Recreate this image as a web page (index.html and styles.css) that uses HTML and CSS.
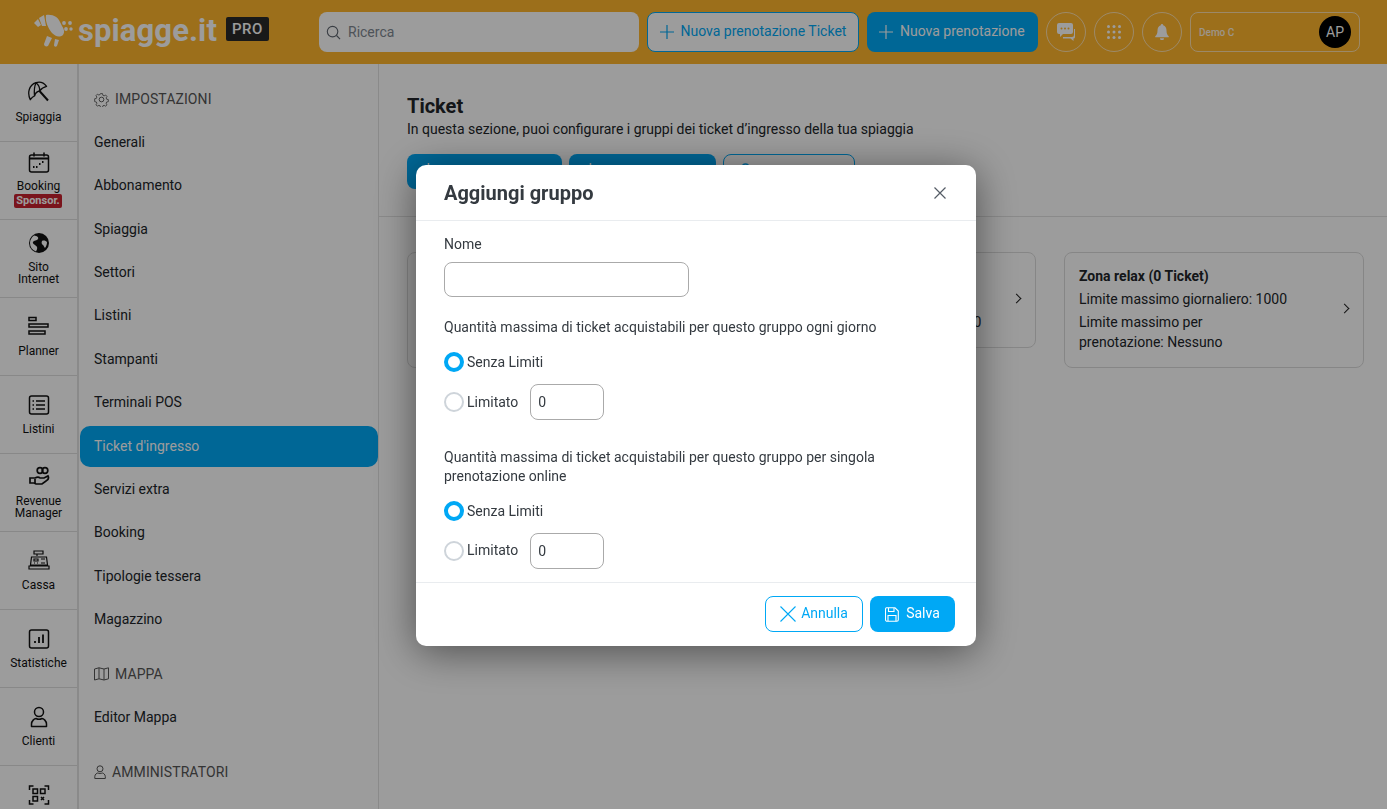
FILE: index.html
```html
<!DOCTYPE html>
<html lang="it">
<head>
<meta charset="utf-8">
<title>Ticket - spiagge.it PRO</title>
<link rel="stylesheet" href="styles.css">
</head>
<body>
<div class="app">
  <header class="topbar">
    <div class="logo">
      <svg class="logo-mark" width="40" height="34" viewBox="0 0 40 34" fill="#fff">
        <path d="M1 9 L5 5 L8 11 L5 13Z"/>
        <path d="M6 4 L11 1 L13 12 L9 12Z"/>
        <path d="M13 1 C20 0 25 3 27 8 L29 12 C31 15 32 18 30 21 C26 24 22 22 19 19 C15 14 12 7 13 1Z"/>
        <circle cx="31" cy="9" r="1.900"/><circle cx="37" cy="9" r="1.900"/><circle cx="33" cy="15" r="1.900"/><circle cx="38" cy="15" r="1.700"/>
        <path d="M14 22 L19 24 L15 32 C13 33 11 32 11 30Z"/>
        <path d="M22 25 L26 26 L24 32 C23 33 21 33 21 31Z"/>
      </svg>
      <span class="logo-text">spiagge.it</span>
      <span class="logo-pro">PRO</span>
    </div>
    <div class="search">
      <svg width="15" height="15" viewBox="0 0 16 16" fill="none" stroke="#5f6670" stroke-width="1.200"><circle cx="7" cy="7" r="5.600"/><path d="M11.200 11.200 15 15"/></svg>
      <span>Ricerca</span>
    </div>
    <button class="tbtn tbtn-outline"><svg width="14" height="14" viewBox="0 0 14 14" stroke="currentColor" stroke-width="1.200"><path d="M7 0v14M0 7h14"/></svg>Nuova prenotazione Ticket</button>
    <button class="tbtn tbtn-solid"><svg width="14" height="14" viewBox="0 0 14 14" stroke="currentColor" stroke-width="1.200"><path d="M7 0v14M0 7h14"/></svg>Nuova prenotazione</button>
    <div class="round">
      <svg width="20" height="20" viewBox="0 0 20 20" fill="#fff"><path d="M3 1h12a2 2 0 0 1 2 2v7a2 2 0 0 1-2 2H7l-3 3v-3H3a2 2 0 0 1-2-2V3a2 2 0 0 1 2-2z"/><path d="M18 7h1v8a1.500 1.500 0 0 1-1.500 1.500V19l-3-2.500H7V15h9a2 2 0 0 0 2-2z"/><circle cx="5.500" cy="6.500" r="1" fill="#ffb52d"/><circle cx="9" cy="6.500" r="1" fill="#ffb52d"/><circle cx="12.500" cy="6.500" r="1" fill="#ffb52d"/></svg>
    </div>
    <div class="round">
      <svg width="16" height="16" viewBox="0 0 16 16" fill="#fff"><circle cx="2.500" cy="2.500" r="1.500"/><circle cx="8" cy="2.500" r="1.500"/><circle cx="13.500" cy="2.500" r="1.500"/><circle cx="2.500" cy="8" r="1.500"/><circle cx="8" cy="8" r="1.500"/><circle cx="13.500" cy="8" r="1.500"/><circle cx="2.500" cy="13.500" r="1.500"/><circle cx="8" cy="13.500" r="1.500"/><circle cx="13.500" cy="13.500" r="1.500"/></svg>
    </div>
    <div class="round">
      <svg width="14" height="16" viewBox="0 0 14 16" fill="#fff"><path d="M7 0a1.200 1.200 0 0 1 1.200 1.300C10.500 2 11.500 4 11.500 6.500c0 3 .8 4.300 2.200 5.800.3.400.1 1-.5 1H.8c-.6 0-.8-.6-.5-1C1.700 10.800 2.500 9.500 2.500 6.500 2.500 4 3.500 2 5.800 1.300A1.200 1.200 0 0 1 7 0z"/><path d="M5 14.300h4a2 2 0 0 1-4 0z"/></svg>
    </div>
    <div class="account">
      <span class="account-name">Demo C</span>
      <span class="avatar">AP</span>
    </div>
  </header>

  <div class="body">
    <nav class="rail">
      <a class="rail-item">
        <svg width="24" height="24" viewBox="0 0 24 24" fill="none" stroke="#111" stroke-width="1.300" stroke-linejoin="round"><path d="M3.300 18.700C0 12 2 4 9 1.700 13 .5 17 2 19.600 5.300 16 6 14 8 12.500 10 10 10.500 8 13 7.500 15 6 15.500 4.500 17 3.300 18.700Z"/><path d="M9 1.700C7 6 7 10 7.500 15M9 1.700C12 4 13 7 12.500 10"/><path d="M12.500 10 21 19.500" stroke-width="2"/></svg>
        <span>Spiaggia</span>
      </a>
      <a class="rail-item">
        <svg width="22" height="22" viewBox="0 0 22 22" fill="none" stroke="#111" stroke-width="1.500"><rect x="1.500" y="3" width="19" height="17" rx="2"/><path d="M1.500 6.500h19" stroke-width="2"/><path d="M6 1v3M16 1v3" stroke-linecap="round"/><path d="M5 15h1.500M8 15h1.500M11 12h1.500M14 10h1.500" stroke-width="1.800"/></svg>
        <span>Booking</span>
        <em class="sponsor">Sponsor.</em>
      </a>
      <a class="rail-item">
        <svg width="22" height="22" viewBox="0 0 22 22"><circle cx="11" cy="11" r="10" fill="#111"/><path d="M6 3.500C9 4 11 5 10 7 9 9 6 8 5 10c-1 2 3 3 4 5 .6 1.400-.2 3-1 4.500C4 18 2 15 2 11 2 8 3.500 5.500 6 3.500zM14 9c2-1 4 0 5 1 0 2-.5 4-2 6-1-1-1-2-2-3-1-.5-2-2-1-4z" fill="#fff" stroke="none"/></svg>
        <span>Sito<br>Internet</span>
      </a>
      <a class="rail-item">
        <svg width="22" height="22" viewBox="0 0 22 22" fill="none" stroke="#111" stroke-width="1.500"><rect x="1" y="1.500" width="7" height="3"/><rect x="1" y="8" width="19" height="3"/><rect x="1" y="15" width="16" height="3"/></svg>
        <span>Planner</span>
      </a>
      <a class="rail-item">
        <svg width="22" height="22" viewBox="0 0 22 22" fill="none" stroke="#111" stroke-width="1.500"><rect x="1.500" y="2" width="19" height="18" rx="2"/><path d="M8 7h9M8 11h9M8 15h9"/><path d="M4.500 7h1.500M4.500 11h1.500M4.500 15h1.500"/></svg>
        <span>Listini</span>
      </a>
      <a class="rail-item">
        <svg width="22" height="22" viewBox="0 0 22 22" fill="none" stroke="#111" stroke-width="1.700"><circle cx="12" cy="4.500" r="2.800"/><circle cx="17" cy="4.500" r="2.800"/><path d="M2 12h5c2-1 4-1 5 0h4l4-2c1 2 0 4-2 5l-4 3H8l-2-1H2z"/><path d="M7 13v4"/></svg>
        <span>Revenue<br>Manager</span>
      </a>
      <a class="rail-item">
        <svg width="22" height="22" viewBox="0 0 22 22" fill="none" stroke="#111" stroke-width="1.200"><path d="M6 1h9v3H6zM9 4v2M3.500 7h15l1 8h-17zM1 16h20v3H1z"/><path d="M6 9h4v2H6zM13 9h4M6 13h1M9 13h1M13 13h4"/></svg>
        <span>Cassa</span>
      </a>
      <a class="rail-item">
        <svg width="22" height="22" viewBox="0 0 22 22" fill="none" stroke="#111" stroke-width="1.500"><rect x="1.500" y="2" width="19" height="18" rx="2"/><path d="M7 15v-2M11 15V9M15 15V6.500" stroke-width="1.800"/></svg>
        <span>Statistiche</span>
      </a>
      <a class="rail-item">
        <svg width="22" height="22" viewBox="0 0 22 22" fill="none" stroke="#111" stroke-width="1.500"><circle cx="11" cy="6" r="4.500"/><path d="M3.500 20.500v-2.500c0-3 3-5.500 4.500-5.500 2 1 4 1 6 0 1.500 0 4.500 2.500 4.500 5.500v2.500z" stroke-linejoin="round"/></svg>
        <span>Clienti</span>
      </a>
      <a class="rail-item">
        <svg width="22" height="22" viewBox="0 0 22 22" fill="none" stroke="#111" stroke-width="1.500"><path d="M1.500 6V2h4M16.500 2h4v4M1.500 16v4h4M20.500 16v4h-4"/><rect x="5" y="5" width="4.500" height="4.500"/><rect x="12.500" y="5" width="4.500" height="4.500"/><rect x="5" y="12.500" width="4.500" height="4.500"/><path d="M13 13l3 3M16 13l-3 3"/></svg>
      </a>
    </nav>

    <aside class="subnav">
      <h3 class="sub-title">
        <svg width="15" height="15" viewBox="0 0 16 16" fill="none" stroke="#555" stroke-width="1"><circle cx="8" cy="8" r="2.500"/><path d="M6.800 1h2.400l.4 2 1.500.7 1.800-1 1.600 1.700-1 1.700.6 1.600 2 .4v2.400l-2 .5-.6 1.500 1 1.800-1.600 1.600-1.800-1-1.500.6-.4 2H6.800l-.4-2-1.500-.6-1.800 1-1.600-1.600 1-1.800-.6-1.500-2-.5V7.100l2-.4.6-1.600-1-1.700 1.600-1.700 1.800 1 1.500-.7z" transform="translate(.8 .8) scale(.9)"/></svg>
        IMPOSTAZIONI
      </h3>
      <a class="sub-link">Generali</a>
      <a class="sub-link wide">Abbonamento</a>
      <a class="sub-link">Spiaggia</a>
      <a class="sub-link">Settori</a>
      <a class="sub-link wide">Listini</a>
      <a class="sub-link">Stampanti</a>
      <a class="sub-link wide">Terminali POS</a>
      <a class="sub-link active">Ticket d'ingresso</a>
      <a class="sub-link">Servizi extra</a>
      <a class="sub-link wide">Booking</a>
      <a class="sub-link">Tipologie tessera</a>
      <a class="sub-link">Magazzino</a>
      <h3 class="sub-title sub-title-map">
        <svg width="15" height="14" viewBox="0 0 15 14" fill="none" stroke="#555" stroke-width="1"><path d="M.5 2 5 .8l5 1.200 4.500-1.200v11L10 13l-5-1.200-4.500 1.200zM5 .8v11M10 2v11"/></svg>
        MAPPA
      </h3>
      <a class="sub-link">Editor Mappa</a>
      <h3 class="sub-title sub-title-admin">
        <svg width="12" height="14" viewBox="0 0 12 14" fill="none" stroke="#555" stroke-width="1"><circle cx="6" cy="3.800" r="3"/><path d="M.8 13.500v-2c0-2 2-3.500 3-3.500 1.500.6 3 .6 4.500 0 1 0 3 1.500 3 3.500v2z"/></svg>
        AMMINISTRATORI
      </h3>
    </aside>

    <main class="main">
      <section class="main-head">
        <h1>Ticket</h1>
        <p>In questa sezione, puoi configurare i gruppi dei ticket d’ingresso della tua spiaggia</p>
        <div class="main-actions">
          <button class="act act-solid act-a"><svg width="17" height="17" viewBox="0 0 17 17" stroke="currentColor" stroke-width="1.500"><path d="M8.500 0v17M0 8.500h17"/></svg></button>
          <button class="act act-solid act-b"><svg width="17" height="17" viewBox="0 0 17 17" stroke="currentColor" stroke-width="1.500"><path d="M8.500 0v17M0 8.500h17"/></svg></button>
          <button class="act act-outline act-c"><svg width="17" height="17" viewBox="0 0 17 17" fill="none" stroke="currentColor" stroke-width="1.500"><circle cx="8.500" cy="5" r="4"/></svg></button>
        </div>
      </section>
      <section class="cards">
        <article class="card card-tall"></article>
        <article class="card">
          <div class="card-body">
            <h4>Piscina (0 Ticket)</h4>
            <p>Limite massimo giornaliero: 1000</p>
            <p>Limite massimo per prenotazione: 10</p>
          </div>
          <span class="chev"></span>
        </article>
        <article class="card card-tall">
          <div class="card-body">
            <h4>Zona relax (0 Ticket)</h4>
            <p>Limite massimo giornaliero: 1000</p>
            <p>Limite massimo per prenotazione:&nbsp;Nessuno</p>
          </div>
          <span class="chev"></span>
        </article>
      </section>
    </main>
  </div>
</div>

<div class="overlay">
  <div class="modal">
    <div class="modal-head">
      <h2>Aggiungi gruppo</h2>
      <svg class="close" width="12" height="12" viewBox="0 0 12 12" stroke="#555c66" stroke-width="1.200"><path d="M.5.500l11 11M11.500.500l-11 11"/></svg>
    </div>
    <div class="modal-body">
      <label class="field-label">Nome</label>
      <input class="text-input" type="text">
      <p class="q q-first">Quantità massima di ticket acquistabili per questo gruppo ogni giorno</p>
      <div class="radio-row"><span class="radio on"></span><span>Senza Limiti</span></div>
      <div class="radio-row radio-row-lim"><span class="radio"></span><span>Limitato</span><span class="num">0</span></div>
      <p class="q q-second">Quantità massima di ticket acquistabili per questo gruppo per singola prenotazione online</p>
      <div class="radio-row"><span class="radio on"></span><span>Senza Limiti</span></div>
      <div class="radio-row radio-row-lim radio-row-last"><span class="radio"></span><span class="lim-label">Limitato</span><span class="num">0</span></div>
    </div>
    <div class="modal-foot">
      <button class="mbtn mbtn-outline"><svg width="16" height="16" viewBox="0 0 16 16" stroke="currentColor" stroke-width="1.100"><path d="M.5.500l15 15M15.500.500l-15 15"/></svg>Annulla</button>
      <button class="mbtn mbtn-solid"><svg width="14" height="15" viewBox="0 0 14 15" fill="none" stroke="currentColor" stroke-width="1.100"><path d="M1.500.8h8.500l3.300 3.300v8.600a1.500 1.500 0 0 1-1.500 1.500h-10.300a1.500 1.500 0 0 1-1-1.500V2.300a1.500 1.500 0 0 1 1-1.500z"/><path d="M3.500 1v3.500h5.500V1M3 14V8.500h8V14"/></svg>Salva</button>
    </div>
  </div>
</div>
</body>
</html>
```

FILE: styles.css
```css
* { box-sizing: border-box; }
html, body { margin: 0; height: 100%; overflow: hidden; }
body { font-family: Roboto, "Liberation Sans", sans-serif; font-size: 14px; color: #212529; background: #fff; }
button { font-family: inherit; cursor: pointer; }
h1, h2, h3, h4, p { margin: 0; }

.app { display: flex; flex-direction: column; height: 809px; overflow: hidden; }

.topbar { flex: 0 0 64px; height: 64px; background: #ffb52d; display: flex; align-items: center; padding: 0 0 0 33px; }
.logo { display: flex; align-items: center; width: 286px; flex: 0 0 286px; color: #fff; }
.logo-mark { flex: none; margin-right: 5px; margin-top: -2px; }
.logo-text { font-size: 31px; font-weight: 700; letter-spacing: .1px; line-height: 1; margin-right: 9px; margin-top: -3px; }
.logo-pro { background: #2a2a2a; color: #fff; font-size: 15px; font-weight: 500; letter-spacing: .5px; padding: 2px 6px; border-radius: 2px; height: 24px; line-height: 20px; margin-top: -6px; }
.search { width: 320px; height: 40px; background: #fff; border-radius: 8px; display: flex; align-items: center; gap: 7px; padding: 0 7px; margin-right: 8px; color: #808892; font-size: 14px; flex: none; }
.tbtn { height: 40px; border-radius: 8px; font-size: 14px; line-height: 18px; display: flex; align-items: center; gap: 6.500px; padding: 0 8px 2px; margin-right: 8px; flex: none; white-space: nowrap; }
.tbtn svg { margin-top: 2px; }
.tbtn-outline { width: 212px; background: #fff; color: #00a8f5; border: 1px solid #00a8f5; padding-left: 12px; padding-right: 11px; }
.tbtn-solid { width: 171px; background: #00a8f5; color: #fff; border: 0; padding-left: 12px; padding-right: 12px; gap: 7px; }
.round { width: 40px; height: 40px; flex: none; border: 1px solid rgba(255,255,255,.6); border-radius: 50%; display: flex; align-items: center; justify-content: center; margin-right: 8px; }
.account { width: 170px; height: 40px; flex: none; border: 1px solid rgba(255,255,255,.6); border-radius: 8px; display: flex; align-items: center; justify-content: space-between; padding: 0 8px 0 8px; color: #fff; }
.account-name { font-size: 10px; font-weight: 500; opacity: .85; }
.avatar { width: 32px; height: 32px; border-radius: 50%; background: #000; display: flex; align-items: center; justify-content: center; color: #fff; font-size: 14px; line-height: 1; }

.body { flex: 1; display: flex; min-height: 0; }

.rail { flex: 0 0 79px; width: 79px; border-right: 2px solid #e2e2e2; display: flex; flex-direction: column; overflow: hidden; background: #fff; }
.rail-item { flex: 0 0 78px; height: 78px; width: 77px; border-bottom: 1px solid #dedede; display: flex; flex-direction: column; align-items: center; padding-top: 18px; text-align: center; font-size: 12px; line-height: 12px; color: #111; }
.rail-item svg { display: block; flex: none; margin-bottom: 7px; }
.rail-item:nth-child(1) { padding-top: 17px; }
.rail-item:nth-child(2) { padding-top: 10px; }
.rail-item:nth-child(3) { padding-top: 12px; }
.rail-item:nth-child(6) { padding-top: 12px; }
.rail-item:nth-child(1) svg, .rail-item:nth-child(2) svg { margin-bottom: 6px; }
.sponsor { display: block; margin: 2px 1px 0 0; background: #c8212e; color: #fff; font-style: normal; font-weight: 700; font-size: 11px; line-height: 14px; height: 14px; width: 48px; border-radius: 2px; }

.subnav { flex: 0 0 300px; width: 300px; border-right: 1px solid #e2e2e2; padding: 0 0 0 1px; background: #fff; overflow: hidden; }
.sub-title { font-size: 14px; font-weight: 400; color: #555; display: flex; align-items: center; gap: 6px; height: 20px; padding-left: 14px; margin-top: 25px; margin-bottom: 13px; letter-spacing: .1px; }
.sub-title-map, .sub-title-admin { margin-top: 24px; }
.sub-link { display: flex; align-items: center; height: 41px; margin-bottom: 2px; padding: 0 0 1px 14px; font-size: 14px; color: #212529; border-radius: 10px; }
.sub-link.wide { margin-bottom: 3px; }
.sub-link.active { background: #00a8f5; color: #fff; }

.main { flex: 1; min-width: 0; background: #fff; }
.main-head { height: 153px; border-bottom: 1px solid #e2e2e2; padding: 30px 28px 0 28px; }
.main-head h1 { font-size: 20px; line-height: 24px; font-weight: 700; color: #212529; }
.main-head p { font-size: 14px; line-height: 20px; margin-top: 1px; }
.main-actions { display: flex; gap: 7px; margin-top: 15px; }
.act { height: 35px; border-radius: 8px; flex: none; display: flex; align-items: center; padding: 0 0 0 12.500px; }
.act-solid { background: #00a8f5; border: 0; color: #fff; }
.act-outline { background: #fff; border: 1px solid #00a8f5; color: #00a8f5; }
.act-a { width: 155px; }
.act-b { width: 147px; }
.act-c { width: 132px; }

.cards { display: flex; align-items: flex-start; gap: 28.500px; padding: 35px 0 0 28px; }
.card { flex: 0 0 300px; width: 300px; height: 96px; border: 1px solid #dcdcdc; border-radius: 8px; padding: 14px; display: flex; align-items: center; }
.card-tall { height: 116px; }
.card-body { flex: 1; min-width: 0; margin-top: -3px; }
.card h4 { font-size: 14px; font-weight: 700; line-height: 20px; color: #212529; }
.card p { font-size: 14px; line-height: 20px; margin-top: 3px; }
.chev { flex: none; width: 7px; height: 7px; border-top: 1.700px solid #222; border-right: 1.700px solid #222; transform: rotate(45deg); margin-right: 1px; margin-top: -4px; }

.overlay { position: fixed; inset: 0; background: rgba(0,0,0,.39); }
.modal { position: absolute; left: 416px; top: 165px; width: 560px; height: 481px; background: #fff; border-radius: 10px; box-shadow: 0 6px 40px rgba(0,0,0,.5); display: flex; flex-direction: column; overflow: hidden; color: #343a40; }
.modal-head { height: 56px; flex: none; border-bottom: 1px solid #e9ecef; display: flex; align-items: center; justify-content: space-between; padding: 0 30px 0 28px; }
.modal-head h2 { font-size: 20px; font-weight: 700; color: #343a40; }
.modal-body { flex: 1; padding: 14px 28px 0 28px; min-height: 0; }
.field-label { display: block; font-size: 14px; line-height: 18px; }
.text-input { display: block; width: 245px; height: 35px; margin-top: 9px; border: 1px solid #aaa; border-radius: 8px; background: #fff; outline: none; }
.q { font-size: 14px; line-height: 19px; }
.q-first { margin-top: 21px; }
.q-second { margin-top: 28px; width: 480px; }
.radio-row { display: flex; align-items: center; height: 20px; margin-top: 15px; font-size: 14px; }
.radio-row-lim { height: 36px; margin-top: 12px; }
.lim-label { margin-bottom: 2px; }
.radio { width: 20px; height: 20px; border-radius: 50%; border: 2px solid #ced4da; margin-right: 3px; flex: none; }
.radio.on { border: 4.500px solid #00a8f5; }
.num { width: 74px; height: 36px; margin-left: 12px; border: 1px solid #aaa; border-radius: 8px; display: flex; align-items: center; padding-left: 7px; }
.modal-foot { height: 64px; flex: none; border-top: 1px solid #e9ecef; display: flex; justify-content: flex-end; align-items: center; gap: 7px; padding: 0 21px 2px 0; }
.mbtn { height: 36px; border-radius: 8px; font-size: 14px; display: flex; align-items: center; justify-content: center; gap: 5px; padding-bottom: 2px; }
.mbtn svg { margin-top: 2px; }
.mbtn-outline { width: 98px; background: #fff; border: 1px solid #00a8f5; color: #00a8f5; }
.mbtn-solid { width: 85px; background: #00a8f5; border: 0; color: #fff; gap: 7px; }
```
